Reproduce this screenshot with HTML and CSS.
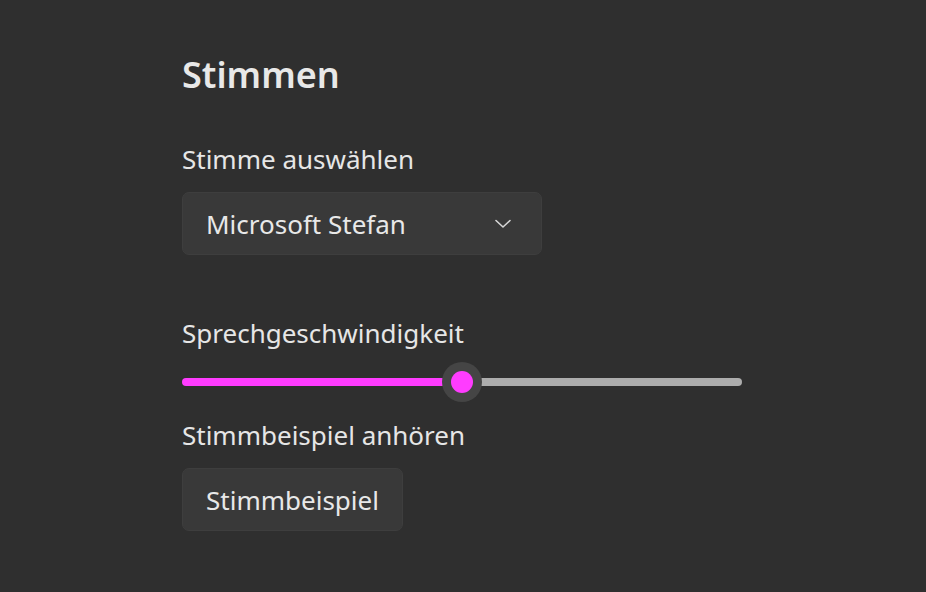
FILE: index.html
```html
<!DOCTYPE html>
<html lang="de">
<head>
<meta charset="utf-8">
<title>Stimmen</title>
<link rel="stylesheet" href="styles.css">
</head>
<body>
<main class="panel">
  <h1 class="title">Stimmen</h1>
  <div class="label label-voice">Stimme auswählen</div>
  <div class="dropdown">
    <span class="dropdown-text">Microsoft Stefan</span>
    <svg class="chevron" width="16" height="10" viewBox="0 0 16 10"><path d="M1 1.5 L8 8 L15 1.5" fill="none" stroke="#d6d6d6" stroke-width="1.6" stroke-linecap="round" stroke-linejoin="round"/></svg>
  </div>
  <div class="label label-speed">Sprechgeschwindigkeit</div>
  <div class="slider">
    <div class="track">
      <div class="fill"></div>
      <div class="rest"></div>
    </div>
    <div class="thumb"><div class="thumb-dot"></div></div>
  </div>
  <div class="label label-sample">Stimmbeispiel anhören</div>
  <button class="button">Stimmbeispiel</button>
</main>
</body>
</html>
```
FILE: styles.css
```css
html, body {
  margin: 0;
  padding: 0;
  background: #2f2f2f;
  height: 100%;
}
body {
  font-family: "Noto Sans", "Open Sans", sans-serif;
  color: #e6e6e6;
}
.panel {
  display: flex;
  flex-direction: column;
  align-items: flex-start;
  padding: 50px 0 0 182px;
}
.title {
  margin: 0;
  font-size: 36px;
  line-height: 50px;
  font-weight: 600;
  color: #e8e8e8;
}
.label {
  font-size: 26px;
  line-height: 34px;
}
.label-voice {
  margin-top: 42px;
}
.dropdown {
  margin-top: 16px;
  box-sizing: border-box;
  width: 360px;
  height: 63px;
  background: #393939;
  border: 1px solid #3e3e3e;
  border-radius: 7px;
  display: flex;
  align-items: center;
  justify-content: space-between;
  padding: 0 30px 0 23px;
}
.dropdown-text {
  font-size: 26px;
  color: #e8e8e8;
}
.chevron {
  display: block;
}
.label-speed {
  margin-top: 61px;
}
.slider {
  position: relative;
  width: 560px;
  height: 40px;
  margin-top: 12px;
  display: flex;
  align-items: center;
}
.track {
  width: 100%;
  height: 8px;
  display: flex;
}
.fill {
  width: 280px;
  background: #ff3cff;
  border-radius: 4px 0 0 4px;
}
.rest {
  flex: 1;
  background: #adadad;
  border-radius: 0 4px 4px 0;
}
.thumb {
  position: absolute;
  left: 260px;
  top: 0;
  width: 40px;
  height: 40px;
  border-radius: 50%;
  background: #454545;
  display: flex;
  align-items: center;
  justify-content: center;
}
.thumb-dot {
  width: 22px;
  height: 22px;
  border-radius: 50%;
  background: #ff3cff;
}
.label-sample {
  margin-top: 16px;
}
.button {
  margin-top: 16px;
  box-sizing: border-box;
  width: 221px;
  height: 63px;
  background: #393939;
  border: 1px solid #3e3e3e;
  border-radius: 7px;
  font-family: inherit;
  font-size: 26px;
  color: #e8e8e8;
  padding: 0;
}
```
